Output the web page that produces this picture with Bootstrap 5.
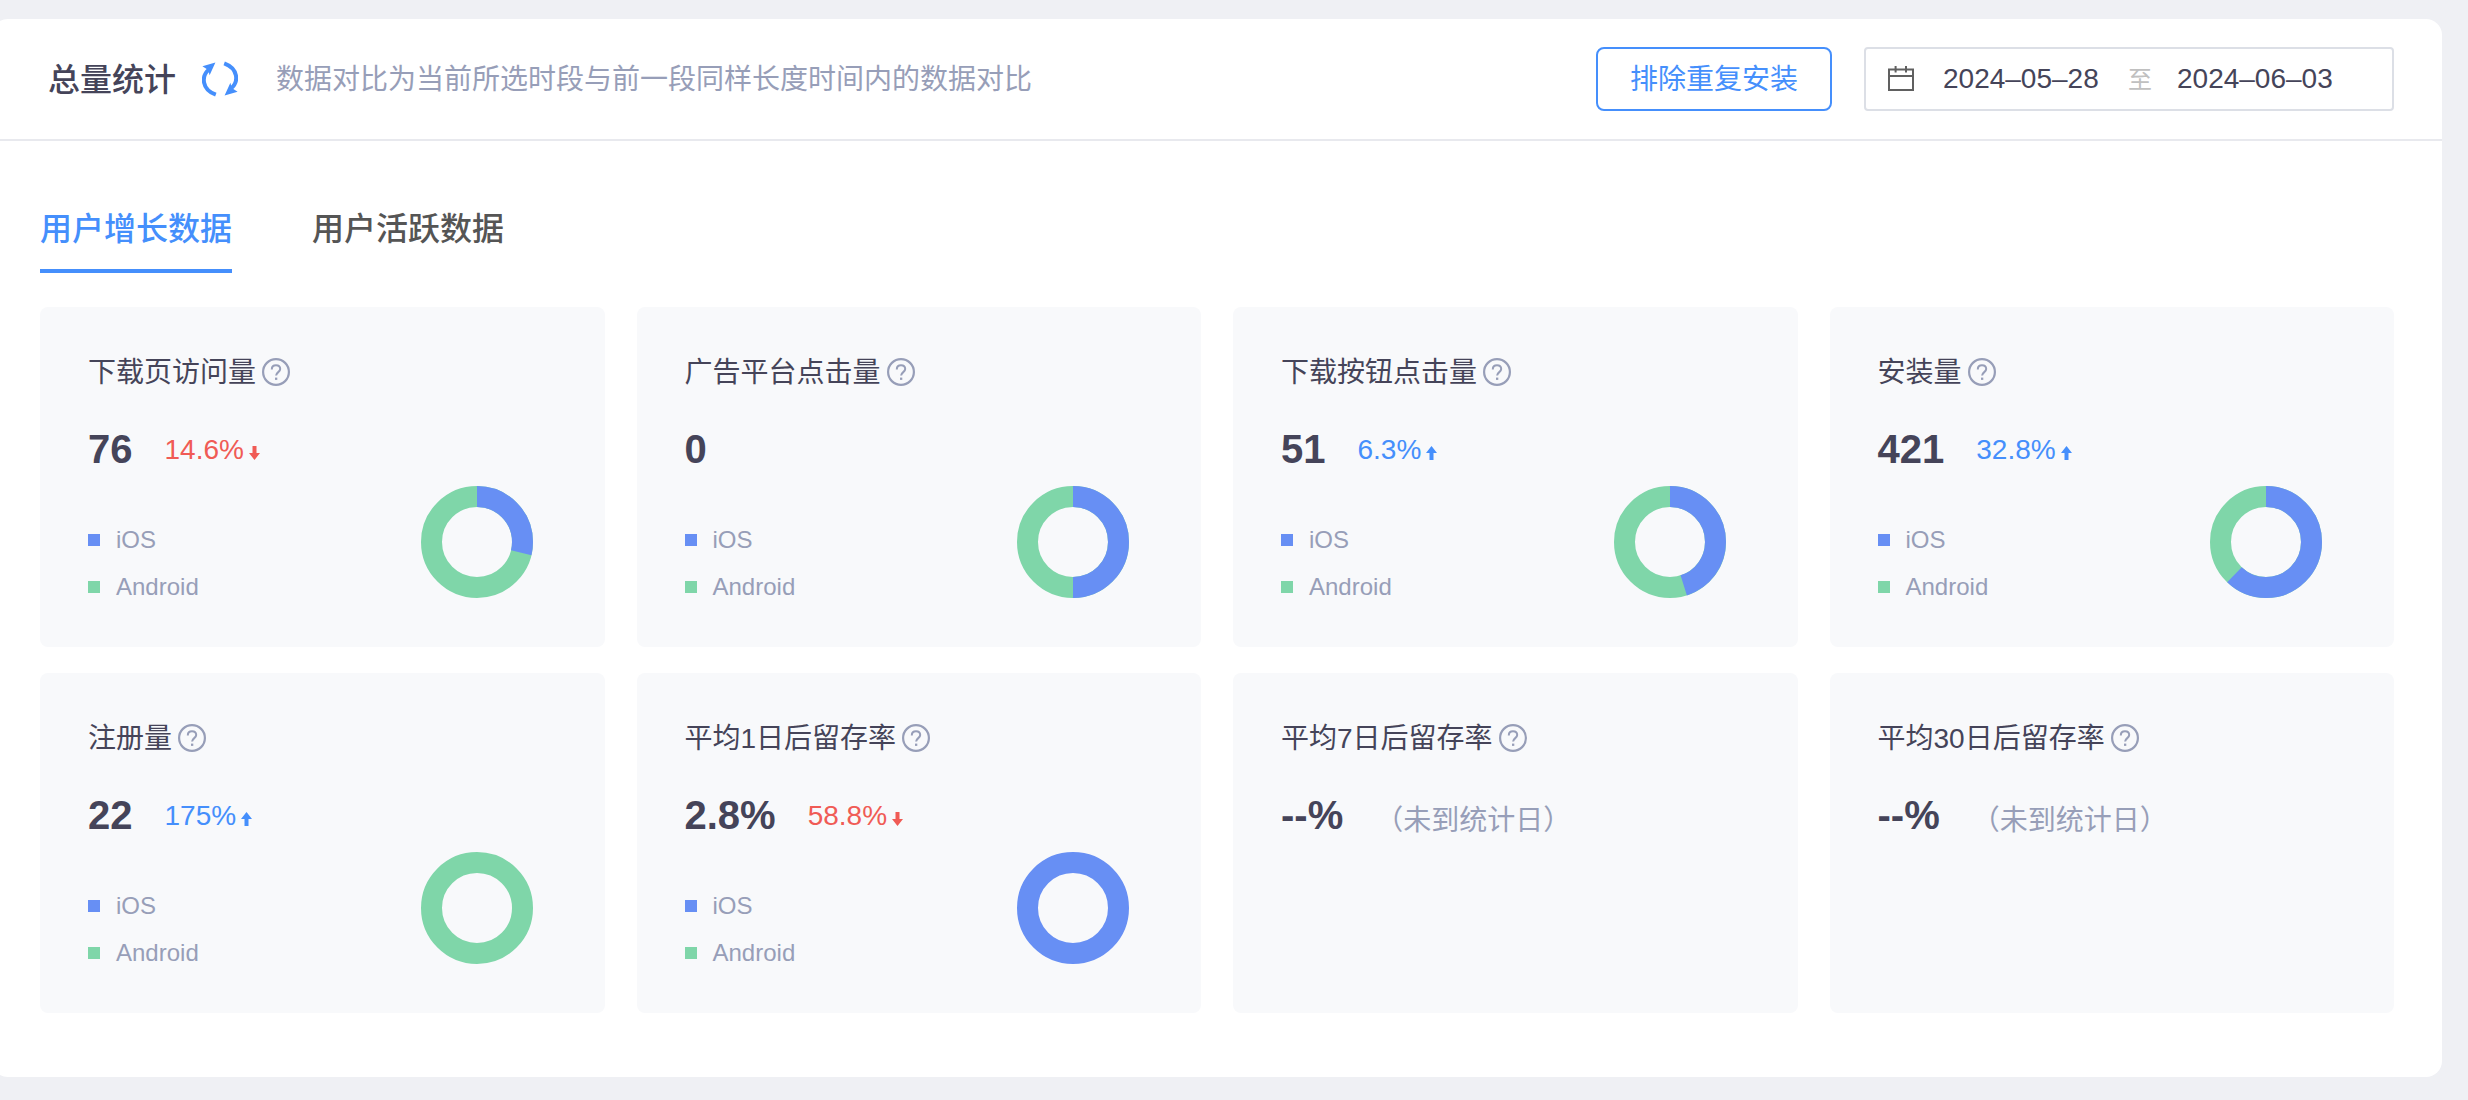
<!DOCTYPE html>
<html lang="zh-CN">
<head>
<meta charset="utf-8">
<meta name="viewport" content="width=device-width, initial-scale=1">
<title>总量统计</title>
<link rel="stylesheet" href="https://cdn.jsdelivr.net/npm/bootstrap@5.3.0/dist/css/bootstrap.min.css">
<style>
  :root { --ink: #454459; --muted: #979eb8; --brand: #458ffc; --fall: #f05b55; --ios: #678ff4; --android: #7fd6a9; }
  body { background: #eff0f4; color: var(--ink); font-family: "Liberation Sans", "Noto Sans CJK SC", sans-serif; font-size: 28px; line-height: 36px; padding: 19px 26px 23px 0; }
  .panel { background: #fff; border-radius: 16px; margin-left: -8px; padding-bottom: 64px; }
  .panel-head { min-height: 122px; padding: 16px 48px 16px 56px; border-bottom: 2px solid #e8e9ee; }
  .panel-title { font-size: 32px; line-height: 48px; font-weight: 500; margin: 0 26px 0 0; padding-top: 2px; }
  .icon-btn { background: none; border: 0; padding: 0; line-height: 0; }
  .hint { color: var(--muted); margin: 0 0 0 38px; padding-top: 2px; }
  .actions { gap: 16px 32px; }
  .dedupe { --bs-btn-color: var(--brand); --bs-btn-border-color: var(--brand); --bs-btn-hover-bg: var(--brand); --bs-btn-hover-color: #fff; --bs-btn-border-width: 2px; --bs-btn-border-radius: 8px; --bs-btn-font-size: 28px; --bs-btn-line-height: 36px; padding: 13px 32px 11px; }
  .range { width: 530px; height: 64px; border: 2px solid #dcdfe6; border-radius: 4px; padding-left: 22px; gap: 25px; }
  .range input { width: 160px; border: 0; padding: 0; background: none; color: var(--ink); outline: 0; }
  .range-sep { color: #c0c0c0; font-size: 24px; padding-top: 2px; }
  .panel-body { padding: 64px 48px 0; }
  .tabs { gap: 80px; margin-bottom: 34px; }
  .tabs .nav-link { padding: 0 0 16px; font-size: 32px; line-height: 48px; font-weight: 500; color: #555; border-bottom: 4px solid transparent; }
  .tabs .nav-link.active { color: var(--brand); border-color: var(--brand); }
  .stats { --bs-gutter-x: 32px; --bs-gutter-y: 26px; }
  .stat { min-height: 340px; background: #f8f9fb; border-radius: 8px; padding: 48px 48px 36px; }
  .stat h2 { font-size: 28px; line-height: 36px; font-weight: 400; margin: 0; }
  .stat-nums { gap: 32px; margin-top: 34px; }
  .stat-val { font-size: 40px; line-height: 48px; font-weight: 700; }
  .rate { padding-top: 2px; }
  .rate svg { margin-left: 5px; vertical-align: -1px; }
  .up { color: var(--brand); }
  .down { color: var(--fall); }
  .note { color: var(--muted); }
  .stat-split { margin-top: 13px; padding-right: 24px; }
  .legend-list { color: var(--muted); font-size: 24px; line-height: 47px; margin: 0; padding-top: 30px; }
  .legend-list li { display: flex; align-items: center; gap: 16px; }
  .legend-list li::before { content: ""; width: 12px; height: 12px; background: var(--ios); }
  .legend-list li + li::before { background: var(--android); }
  .help { color: var(--muted); margin-left: 6px; padding-bottom: 2px; }
  .donut { fill: none; stroke-width: 21; }
</style>
<script defer src="https://cdn.jsdelivr.net/npm/bootstrap@5.3.0/dist/js/bootstrap.bundle.min.js"></script>
</head>
<body>
<svg class="d-none" aria-hidden="true">
  <symbol id="i-help" viewBox="0 0 28 28"><circle cx="14" cy="14" r="12.9" fill="none" stroke="currentColor" stroke-width="2.2"/><path d="M9.8 11.4c0-2.4 1.7-4.1 4.2-4.1s4.2 1.6 4.2 3.8c0 2.9-4.1 3.2-4.1 6.5" fill="none" stroke="currentColor" stroke-width="2"/><rect x="13" y="19.6" width="2.3" height="2.3" fill="currentColor"/></symbol>
  <symbol id="i-up" viewBox="0 0 11 14"><path d="M5.5 0L11 7H7.5v7h-4V7H0z" fill="currentColor"/></symbol>
  <symbol id="i-down" viewBox="0 0 11 14"><path d="M5.5 14L11 7H7.5V0h-4v7H0z" fill="currentColor"/></symbol>
</svg>

<main class="panel">
  <header class="panel-head d-flex flex-wrap align-items-center justify-content-between gap-3">
    <div class="d-flex align-items-center">
      <h1 class="panel-title">总量统计</h1>
      <button type="button" class="icon-btn" aria-label="刷新">
        <svg width="36" height="36" viewBox="0 0 36 36">
          <g id="arc"><path d="M13.8 33.6C-.2 28.5-1.4 15 7.6 8" fill="none" stroke="#458ffc" stroke-width="4"/><path d="M.4 5.2L13.4 1.4 7.6 14.2 6.2 9z" fill="#458ffc"/></g>
          <use href="#arc" transform="rotate(180 18 18)"/>
        </svg>
      </button>
      <p class="hint">数据对比为当前所选时段与前一段同样长度时间内的数据对比</p>
    </div>
    <div class="actions d-flex flex-wrap">
      <button type="button" class="btn dedupe">排除重复安装</button>
      <div class="range d-flex align-items-center">
        <svg width="30" height="26" viewBox="0 0 30 26" fill="none" stroke="#606060" stroke-width="2"><rect x="1" y="3.5" width="24" height="20.5"/><path d="M1 10h24M7.6 0v6.4M18 0v6.4"/></svg>
        <input type="text" aria-label="开始日期" value="2024–05–28">
        <span class="range-sep">至</span>
        <input type="text" aria-label="结束日期" value="2024–06–03">
      </div>
    </div>
  </header>

  <div class="panel-body">
    <nav class="nav tabs">
      <a class="nav-link active" aria-current="page" href="#growth">用户增长数据</a>
      <a class="nav-link" href="#active">用户活跃数据</a>
    </nav>

    <section id="growth" class="stats row row-cols-1 row-cols-md-2 row-cols-xl-4">
      <div class="col"><article class="stat h-100">
        <h2 class="d-flex align-items-center">下载页访问量<button type="button" class="icon-btn help" aria-label="说明"><svg width="28" height="28"><use href="#i-help"/></svg></button></h2>
        <div class="stat-nums d-flex align-items-center"><span class="stat-val">76</span><span class="rate down">14.6%<svg width="11" height="14"><use href="#i-down"/></svg></span></div>
        <div class="stat-split d-flex justify-content-between"><ul class="legend-list list-unstyled"><li>iOS</li><li>Android</li></ul>
          <svg class="donut" width="112" height="112" viewBox="-56 -56 112 112"><circle r="45.5" stroke="#7fd6a9"/><circle r="45.5" stroke="#678ff4" pathLength="100" stroke-dasharray="28.8 100" transform="rotate(-90)"/></svg></div>
      </article></div>

      <div class="col"><article class="stat h-100">
        <h2 class="d-flex align-items-center">广告平台点击量<button type="button" class="icon-btn help" aria-label="说明"><svg width="28" height="28"><use href="#i-help"/></svg></button></h2>
        <div class="stat-nums d-flex align-items-center"><span class="stat-val">0</span></div>
        <div class="stat-split d-flex justify-content-between"><ul class="legend-list list-unstyled"><li>iOS</li><li>Android</li></ul>
          <svg class="donut" width="112" height="112" viewBox="-56 -56 112 112"><circle r="45.5" stroke="#7fd6a9"/><circle r="45.5" stroke="#678ff4" pathLength="100" stroke-dasharray="50 100" transform="rotate(-90)"/></svg></div>
      </article></div>

      <div class="col"><article class="stat h-100">
        <h2 class="d-flex align-items-center">下载按钮点击量<button type="button" class="icon-btn help" aria-label="说明"><svg width="28" height="28"><use href="#i-help"/></svg></button></h2>
        <div class="stat-nums d-flex align-items-center"><span class="stat-val">51</span><span class="rate up">6.3%<svg width="11" height="14"><use href="#i-up"/></svg></span></div>
        <div class="stat-split d-flex justify-content-between"><ul class="legend-list list-unstyled"><li>iOS</li><li>Android</li></ul>
          <svg class="donut" width="112" height="112" viewBox="-56 -56 112 112"><circle r="45.5" stroke="#7fd6a9"/><circle r="45.5" stroke="#678ff4" pathLength="100" stroke-dasharray="45.1 100" transform="rotate(-90)"/></svg></div>
      </article></div>

      <div class="col"><article class="stat h-100">
        <h2 class="d-flex align-items-center">安装量<button type="button" class="icon-btn help" aria-label="说明"><svg width="28" height="28"><use href="#i-help"/></svg></button></h2>
        <div class="stat-nums d-flex align-items-center"><span class="stat-val">421</span><span class="rate up">32.8%<svg width="11" height="14"><use href="#i-up"/></svg></span></div>
        <div class="stat-split d-flex justify-content-between"><ul class="legend-list list-unstyled"><li>iOS</li><li>Android</li></ul>
          <svg class="donut" width="112" height="112" viewBox="-56 -56 112 112"><circle r="45.5" stroke="#7fd6a9"/><circle r="45.5" stroke="#678ff4" pathLength="100" stroke-dasharray="62.2 100" transform="rotate(-90)"/></svg></div>
      </article></div>

      <div class="col"><article class="stat h-100">
        <h2 class="d-flex align-items-center">注册量<button type="button" class="icon-btn help" aria-label="说明"><svg width="28" height="28"><use href="#i-help"/></svg></button></h2>
        <div class="stat-nums d-flex align-items-center"><span class="stat-val">22</span><span class="rate up">175%<svg width="11" height="14"><use href="#i-up"/></svg></span></div>
        <div class="stat-split d-flex justify-content-between"><ul class="legend-list list-unstyled"><li>iOS</li><li>Android</li></ul>
          <svg class="donut" width="112" height="112" viewBox="-56 -56 112 112"><circle r="45.5" stroke="#7fd6a9"/></svg></div>
      </article></div>

      <div class="col"><article class="stat h-100">
        <h2 class="d-flex align-items-center">平均1日后留存率<button type="button" class="icon-btn help" aria-label="说明"><svg width="28" height="28"><use href="#i-help"/></svg></button></h2>
        <div class="stat-nums d-flex align-items-center"><span class="stat-val">2.8%</span><span class="rate down">58.8%<svg width="11" height="14"><use href="#i-down"/></svg></span></div>
        <div class="stat-split d-flex justify-content-between"><ul class="legend-list list-unstyled"><li>iOS</li><li>Android</li></ul>
          <svg class="donut" width="112" height="112" viewBox="-56 -56 112 112"><circle r="45.5" stroke="#678ff4"/></svg></div>
      </article></div>

      <div class="col"><article class="stat h-100">
        <h2 class="d-flex align-items-center">平均7日后留存率<button type="button" class="icon-btn help" aria-label="说明"><svg width="28" height="28"><use href="#i-help"/></svg></button></h2>
        <div class="stat-nums d-flex align-items-end"><span class="stat-val">--%</span><span class="note">（未到统计日）</span></div>
      </article></div>

      <div class="col"><article class="stat h-100">
        <h2 class="d-flex align-items-center">平均30日后留存率<button type="button" class="icon-btn help" aria-label="说明"><svg width="28" height="28"><use href="#i-help"/></svg></button></h2>
        <div class="stat-nums d-flex align-items-end"><span class="stat-val">--%</span><span class="note">（未到统计日）</span></div>
      </article></div>
    </section>
  </div>
</main>
</body>
</html>
